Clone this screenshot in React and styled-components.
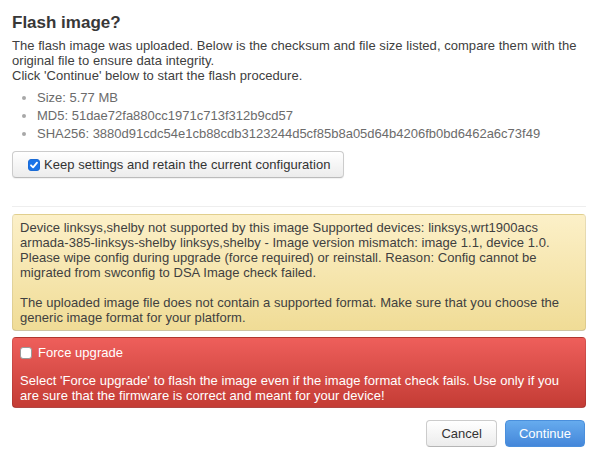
import React, { useState } from 'react';
import styled, { createGlobalStyle } from 'styled-components';

const GlobalStyle = createGlobalStyle`
  html, body {
    margin: 0;
    padding: 0;
    background: #fff;
  }
  body {
    font-family: "Liberation Sans", Arial, Helvetica, sans-serif;
    font-size: 13px;
    color: #404040;
  }
`;

const Modal = styled.div`
  width: 599px;
  box-sizing: border-box;
  padding: 13px 13px 10px 12px;
`;

const Title = styled.h4`
  margin: 0 0 5px;
  font-size: 17px;
  line-height: 20px;
  font-weight: bold;
  color: #383838;
`;

const Text = styled.p`
  margin: 0;
  line-height: 15px;
  letter-spacing: 0.04px;
`;

const Sums = styled.ul`
  margin: 6px 0 0;
  padding: 0 0 0 25px;
  color: #6b6b6b;
  line-height: 18px;

  li::marker {
    color: #a8a8a8;
  }
`;

const OptionButton = styled.label`
  display: flex;
  align-items: center;
  gap: 4px;
  margin-top: 8px;
  height: 27px;
  box-sizing: border-box;
  padding: 0 10px 0 15px;
  width: 332px;
  white-space: nowrap;
  border: 1px solid #ccc;
  border-bottom-color: #bbb;
  border-radius: 4px;
  background: linear-gradient(#ffffff, #ececec);
  box-shadow: 0 1px 1px rgba(0, 0, 0, 0.06);
  font-size: 13px;
  letter-spacing: 0.05px;
  color: #333;
  cursor: pointer;
`;

const Box = styled.span`
  display: inline-flex;
  align-items: center;
  justify-content: center;
  width: 12px;
  height: 12px;
  flex: none;
  border-radius: 3px;
  box-sizing: border-box;
  background: ${(p) => (p.$checked ? '#1a73e8' : '#fff')};
  border: 1px solid ${(p) => (p.$checked ? '#1a6bd6' : '#9a9a9a')};
`;

const Check = ({ checked, onToggle }) => (
  <Box $checked={checked} onClick={onToggle}>
    {checked && (
      <svg width="10" height="10" viewBox="0 0 10 10">
        <path d="M2 5.3 L4.1 7.4 L8 2.6" fill="none" stroke="#fff" strokeWidth="1.8" strokeLinecap="round" strokeLinejoin="round" />
      </svg>
    )}
  </Box>
);

const Divider = styled.hr`
  margin: 28px 0 7px;
  border: 0;
  border-top: 1px solid #eee;
`;

const Alert = styled.div`
  box-sizing: border-box;
  border-radius: 4px;
  padding: ${(p) => p.$pad};
  margin-bottom: 6px;
  line-height: 15px;
  letter-spacing: 0.04px;
  ${(p) =>
    p.$kind === 'danger'
      ? `
    color: #fff;
    background: linear-gradient(#ee5f5b, #c43c35);
    border: 1px solid #c43c35;
    border-color: rgba(0,0,0,0.1) rgba(0,0,0,0.1) rgba(0,0,0,0.25);
  `
      : `
    color: #404040;
    background: linear-gradient(#fcf0c8, #f0dc96);
    border: 1px solid #e6d28a;
    border-color: rgba(0,0,0,0.06) rgba(0,0,0,0.08) rgba(0,0,0,0.18);
  `}
`;

const Gap = styled.div`
  height: ${(p) => p.$h}px;
`;

const ForceRow = styled.label`
  display: flex;
  align-items: center;
  gap: 6px;
  line-height: 17px;
  cursor: pointer;
`;

const Footer = styled.div`
  display: flex;
  justify-content: flex-end;
  gap: 8px;
  margin-top: 12px;
  padding-right: 1px;
`;

const Btn = styled.button`
  height: 27px;
  box-sizing: border-box;
  padding: 0 ${(p) => (p.$primary ? 13 : 14)}px;
  border-radius: 4px;
  font-family: inherit;
  font-size: 13px;
  cursor: pointer;
  ${(p) =>
    p.$primary
      ? `
    color: #fff;
    border: 1px solid #4a8fdc;
    background: linear-gradient(#66abee, #4487da);
  `
      : `
    color: #333;
    border: 1px solid #ccc;
    border-bottom-color: #b5b5b5;
    background: linear-gradient(#ffffff, #ececec);
  `}
`;

export default function App() {
  const [keep, setKeep] = useState(true);
  const [force, setForce] = useState(false);

  return (
    <>
      <GlobalStyle />
      <Modal>
        <Title>Flash image?</Title>
        <Text>
          The flash image was uploaded. Below is the checksum and file size listed, compare them with the
          original file to ensure data integrity.
          <br />
          Click 'Continue' below to start the flash procedure.
        </Text>
        <Sums>
          <li>Size: 5.77 MB</li>
          <li>MD5: 51dae72fa880cc1971c713f312b9cd57</li>
          <li>SHA256: 3880d91cdc54e1cb88cdb3123244d5cf85b8a05d64b4206fb0bd6462a6c73f49</li>
        </Sums>
        <OptionButton onClick={() => setKeep(!keep)}>
          <Check checked={keep} />
          Keep settings and retain the current configuration
        </OptionButton>
        <Divider />
        <Alert $kind="warning" $pad="5px 7px 5px 7px">
          Device linksys,shelby not supported by this image Supported devices: linksys,wrt1900acs
          armada-385-linksys-shelby linksys,shelby - Image version mismatch: image 1.1, device 1.0.
          Please wipe config during upgrade (force required) or reinstall. Reason: Config cannot be
          migrated from swconfig to DSA Image check failed.
          <Gap $h={15} />
          The uploaded image file does not contain a supported format. Make sure that you choose the
          generic image format for your platform.
        </Alert>
        <Alert $kind="danger" $pad="6px 16px 4px 7px">
          <ForceRow onClick={() => setForce(!force)}>
            <Check checked={force} />
            Force upgrade
          </ForceRow>
          <Gap $h={12} />
          Select 'Force upgrade' to flash the image even if the image format check fails. Use only if you
          are sure that the firmware is correct and meant for your device!
        </Alert>
        <Footer>
          <Btn>Cancel</Btn>
          <Btn $primary>Continue</Btn>
        </Footer>
      </Modal>
    </>
  );
}
